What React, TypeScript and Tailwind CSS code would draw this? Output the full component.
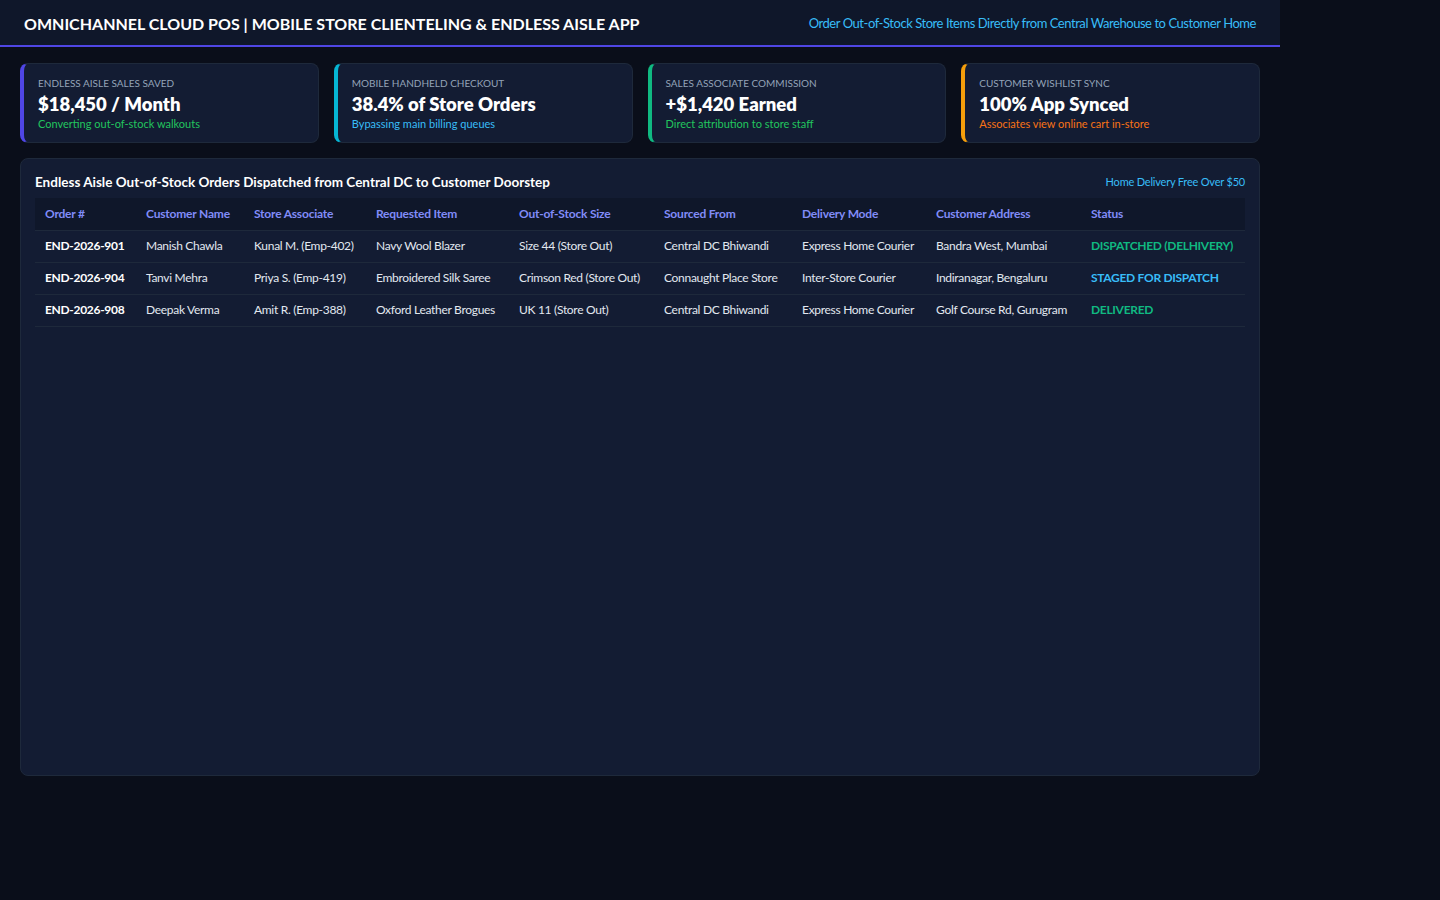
const cards = [
  { label: "Endless Aisle Sales Saved", value: "$18,450 / Month", sub: "Converting out-of-stock walkouts", border: "border-l-[#4f46e5]", subColor: "text-[#22c55e]" },
  { label: "Mobile Handheld Checkout", value: "38.4% of Store Orders", sub: "Bypassing main billing queues", border: "border-l-[#06b6d4]", subColor: "text-[#38bdf8]" },
  { label: "Sales Associate Commission", value: "+$1,420 Earned", sub: "Direct attribution to store staff", border: "border-l-[#10b981]", subColor: "text-[#22c55e]" },
  { label: "Customer Wishlist Sync", value: "100% App Synced", sub: "Associates view online cart in-store", border: "border-l-[#f59e0b]", subColor: "text-[#f97316]" },
]

const headers = ["Order #", "Customer Name", "Store Associate", "Requested Item", "Out-of-Stock Size", "Sourced From", "Delivery Mode", "Customer Address", "Status"]
const widths = ["w-[101px]", "w-[108px]", "w-[122px]", "w-[143px]", "w-[145px]", "w-[138px]", "w-[134px]", "w-[155px]", "w-auto"]

const rows = [
  { id: "END-2026-901", cust: "Manish Chawla", assoc: "Kunal M. (Emp-402)", item: "Navy Wool Blazer", size: "Size 44 (Store Out)", src: "Central DC Bhiwandi", mode: "Express Home Courier", addr: "Bandra West, Mumbai", status: "DISPATCHED (DELHIVERY)", color: "text-[#10b981]" },
  { id: "END-2026-904", cust: "Tanvi Mehra", assoc: "Priya S. (Emp-419)", item: "Embroidered Silk Saree", size: "Crimson Red (Store Out)", src: "Connaught Place Store", mode: "Inter-Store Courier", addr: "Indiranagar, Bengaluru", status: "STAGED FOR DISPATCH", color: "text-[#38bdf8]" },
  { id: "END-2026-908", cust: "Deepak Verma", assoc: "Amit R. (Emp-388)", item: "Oxford Leather Brogues", size: "UK 11 (Store Out)", src: "Central DC Bhiwandi", mode: "Express Home Courier", addr: "Golf Course Rd, Gurugram", status: "DELIVERED", color: "text-[#10b981]" },
]

export default function App() {
  return (
    <div className="min-h-screen bg-[#0a0e1a] font-['Lato',sans-serif] text-white">
      <div className="w-[1280px]">
        <header className="flex h-[47px] items-center justify-between border-b-2 border-[#4f46e5] bg-[#0f172a] px-6 pt-[2px]">
          <h1 className="text-[16px] font-bold">OMNICHANNEL CLOUD POS | MOBILE STORE CLIENTELING &amp; ENDLESS AISLE APP</h1>
          <span className="text-[13px] tracking-[-0.45px] text-[#38bdf8]">Order Out-of-Stock Store Items Directly from Central Warehouse to Customer Home</span>
        </header>

        <div className="px-5 pt-4">
          <div className="grid grid-cols-4 gap-[15px]">
            {cards.map((c) => (
              <div key={c.label} className={`h-[80px] rounded-lg border border-[#1e293b] border-l-4 ${c.border} bg-[#131c33] px-[14px] pt-[12px]`}>
                <div className="text-[10px] uppercase leading-[14px] text-[#94a3b8]">{c.label}</div>
                <div className="mt-[2px] text-[18.5px] font-extrabold leading-[24px]">{c.value}</div>
                <div className={`text-[11px] leading-[15px] ${c.subColor}`}>{c.sub}</div>
              </div>
            ))}
          </div>

          <div className="mt-[15px] h-[618px] rounded-lg border border-[#1e293b] bg-[#131c33] px-[14px] pt-[13px]">
            <div className="flex items-center justify-between">
              <h2 className="text-[13.5px] font-bold">Endless Aisle Out-of-Stock Orders Dispatched from Central DC to Customer Doorstep</h2>
              <span className="text-[11px] tracking-[-0.2px] text-[#38bdf8]">Home Delivery Free Over $50</span>
            </div>
            <table className="mt-[6px] w-full table-fixed border-collapse whitespace-nowrap text-left text-[12px]">
              <colgroup>
                {widths.map((w, i) => (
                  <col key={i} className={w} />
                ))}
              </colgroup>
              <thead>
                <tr className="h-[32px] bg-[#0f172a]">
                  {headers.map((h) => (
                    <th key={h} className="border-b border-[#1e293b] px-[10px] font-bold tracking-[-0.2px] text-[#818cf8]">{h}</th>
                  ))}
                </tr>
              </thead>
              <tbody>
                {rows.map((r) => (
                  <tr key={r.id} className="h-[32px] border-b border-[#1e293b] tracking-[-0.3px] text-[#e2e8f0]">
                    <td className="px-[10px] font-bold text-white">{r.id}</td>
                    <td className="px-[10px]">{r.cust}</td>
                    <td className="px-[10px]">{r.assoc}</td>
                    <td className="px-[10px]">{r.item}</td>
                    <td className="px-[10px]">{r.size}</td>
                    <td className="px-[10px]">{r.src}</td>
                    <td className="px-[10px]">{r.mode}</td>
                    <td className="px-[10px]">{r.addr}</td>
                    <td className={`px-[10px] font-bold ${r.color}`}>{r.status}</td>
                  </tr>
                ))}
              </tbody>
            </table>
          </div>
        </div>
      </div>
    </div>
  )
}
